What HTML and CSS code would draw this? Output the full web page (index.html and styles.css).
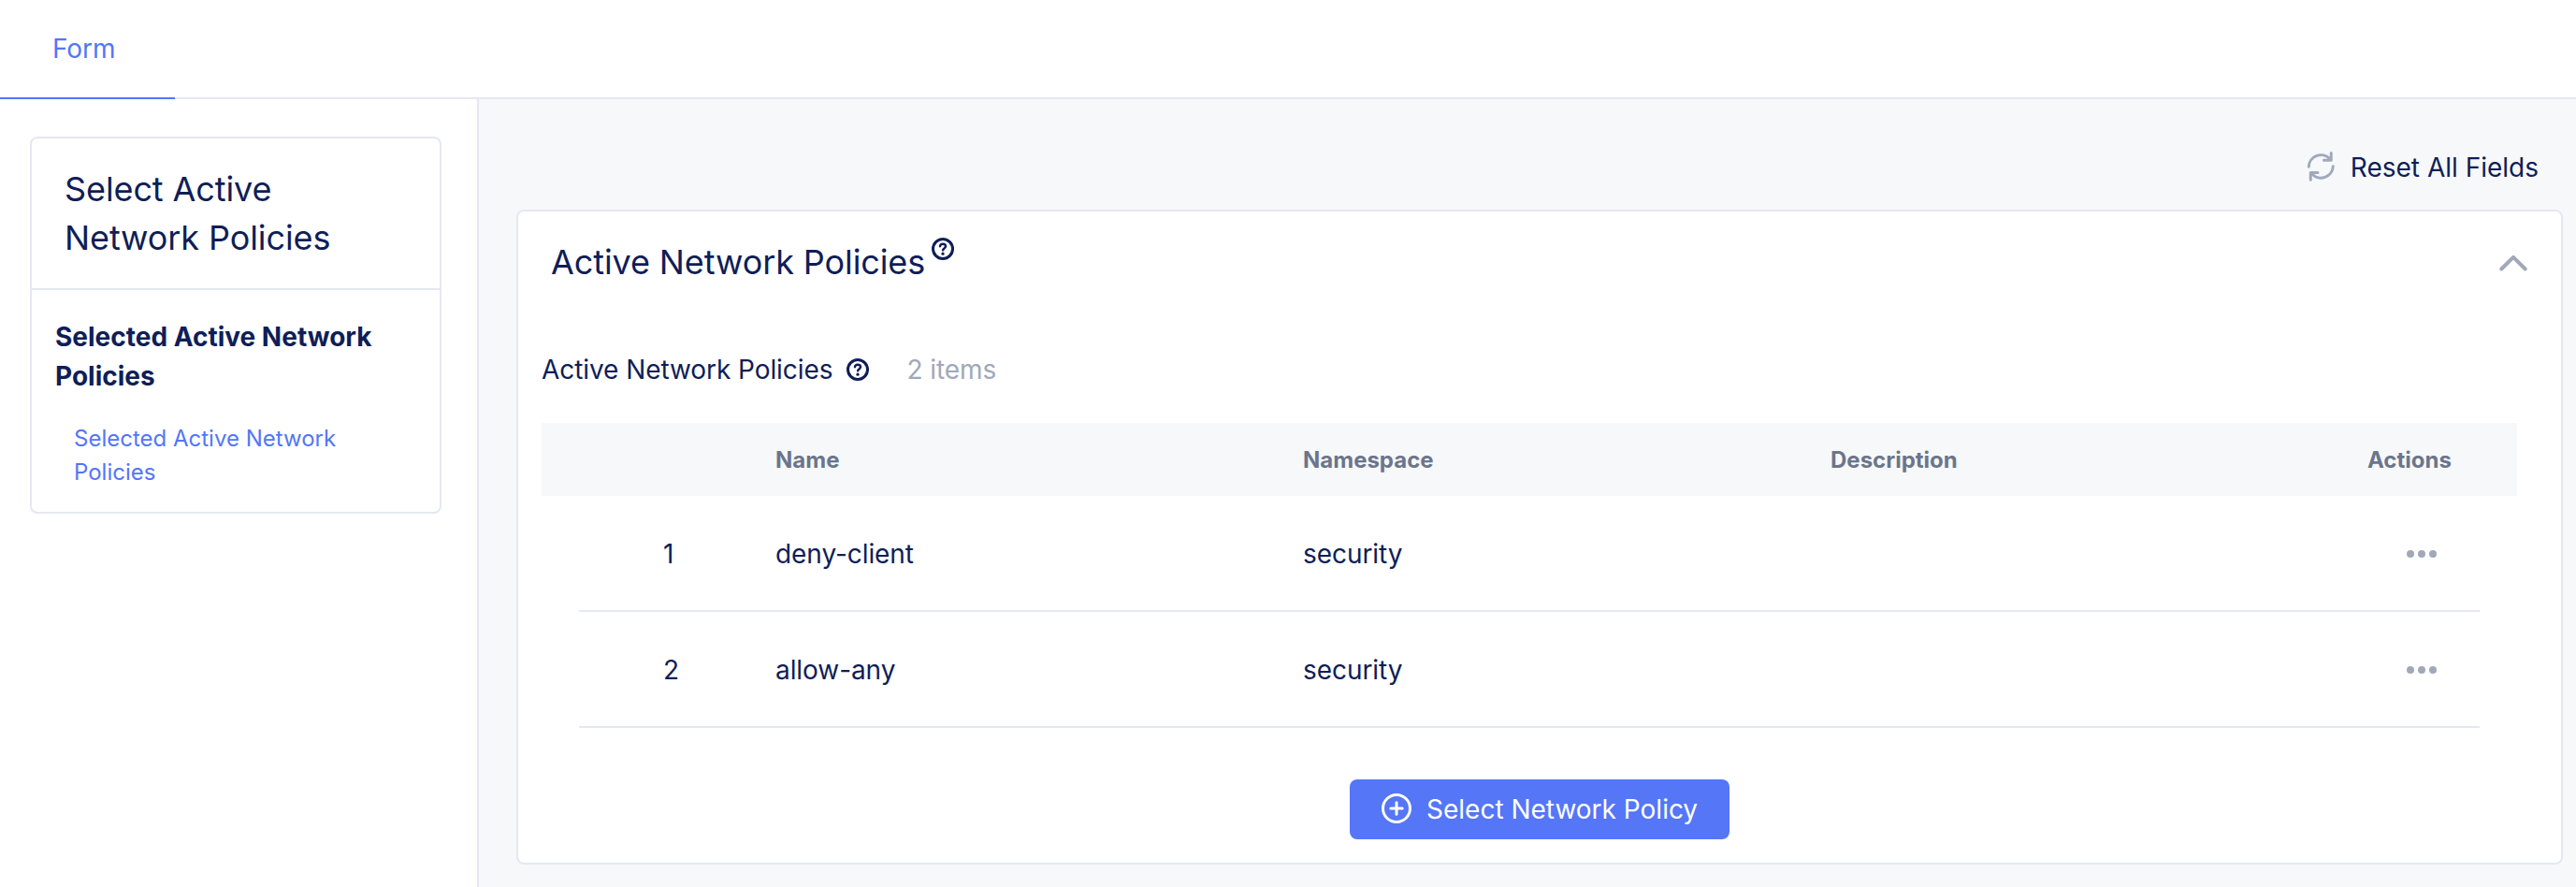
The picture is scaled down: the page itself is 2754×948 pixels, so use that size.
FILE: index.html
```html
<!DOCTYPE html>
<html lang="en">
<head>
<meta charset="utf-8">
<title>Active Network Policies</title>
<link rel="stylesheet" href="styles.css">
</head>
<body>
<header class="tabs"><a class="tab">Form</a></header>
<div class="layout">
  <aside class="sidebar">
    <nav class="nav-card">
      <h2 class="nav-title">Select Active<br>Network Policies</h2>
      <div class="nav-body">
        <div class="nav-section">Selected Active Network Policies</div>
        <a class="nav-link">Selected Active Network Policies</a>
      </div>
    </nav>
  </aside>
  <main class="content">
    <div class="toolbar">
      <svg class="refresh" viewBox="0 0 32 36" fill="none" stroke="#a0a8b9" stroke-width="3" stroke-linecap="round" stroke-linejoin="round"><path d="M3.300 18.300A13 13 0 0 1 26 10M27.200 3.500V11.200H19.500M29.300 17.800A13 13 0 0 1 6.600 25.800M5.300 32.300V24.600H13"/></svg>
      <span class="reset">Reset All Fields</span>
    </div>
    <section class="panel">
      <div class="panel-head">
        <h1 class="panel-title">Active Network Policies</h1>
        <svg class="help help-title" viewBox="0 0 24 24" fill="none" stroke="#0f1e57" stroke-linecap="round"><circle cx="12" cy="12" r="10.500" stroke-width="3"/><path d="M9 9.200c.2-1.500 1.400-2.500 3-2.500 1.700 0 3 1.100 3 2.600 0 1.900-2.700 2.200-2.900 4" stroke-width="2.500"/><circle cx="12" cy="17.200" r="1.600" fill="#0f1e57" stroke="none"/></svg>
        <svg class="chevron" viewBox="0 0 30 18" fill="none" stroke="#a0a8b9" stroke-width="4" stroke-linecap="round" stroke-linejoin="round"><path d="M2.300 15.500 15 2.800l12.700 12.700"/></svg>
      </div>
      <div class="field-head">
        <span>Active Network Policies</span>
        <svg class="help" viewBox="0 0 24 24" fill="none" stroke="#0f1e57" stroke-linecap="round"><circle cx="12" cy="12" r="10.500" stroke-width="3"/><path d="M9 9.200c.2-1.500 1.400-2.500 3-2.500 1.700 0 3 1.100 3 2.600 0 1.900-2.700 2.200-2.900 4" stroke-width="2.500"/><circle cx="12" cy="17.200" r="1.600" fill="#0f1e57" stroke="none"/></svg>
        <span class="count">2 items</span>
      </div>
      <div class="row thead"><span></span><span>Name</span><span>Namespace</span><span>Description</span><span>Actions</span></div>
      <div class="tbody">
        <div class="row"><span class="num">1</span><span>deny-client</span><span>security</span><span></span><svg class="dots" viewBox="0 0 32 8" fill="#a0a8b9"><circle cx="4" cy="4" r="4"/><circle cx="16" cy="4" r="4"/><circle cx="28" cy="4" r="4"/></svg></div>
        <div class="row"><span class="num">2</span><span>allow-any</span><span>security</span><span></span><svg class="dots" viewBox="0 0 32 8" fill="#a0a8b9"><circle cx="4" cy="4" r="4"/><circle cx="16" cy="4" r="4"/><circle cx="28" cy="4" r="4"/></svg></div>
      </div>
      <button class="select-btn">
        <svg class="plus" viewBox="0 0 32 32" fill="none" stroke="#fff" stroke-width="3" stroke-linecap="round"><circle cx="16" cy="16" r="14.500"/><path d="M16 9.800v12.400M9.800 16h12.400"/></svg>
        <span>Select Network Policy</span>
      </button>
    </section>
  </main>
</div>
</body>
</html>
```
FILE: styles.css
```css
* { box-sizing: border-box; }
body {
  margin: 0;
  height: 948px;
  display: flex;
  flex-direction: column;
  overflow: hidden;
  background: #fff;
  color: #0f1e57;
  font: 400 28px/42px Inter, sans-serif;
  letter-spacing: -0.0025em;
}
svg { display: block; flex: none; }
.tabs { height: 106px; display: flex; border-bottom: 2px solid #e5e8f2; }
.tab {
  width: 187px;
  height: 106px;
  padding: 31px 0 0 56px;
  border-bottom: 2px solid #5476f7;
  color: #5476f7;
}
.layout { flex: 1; display: flex; }
.sidebar { width: 512px; padding: 40px 38px 0 32px; border-right: 2px solid #e5e8f2; }
.nav-card { height: 403px; border: 2px solid #e5e8f2; border-radius: 8px; }
.nav-title {
  margin: 0;
  height: 162px;
  padding: 28px 0 0 35px;
  border-bottom: 2px solid #e5e8f2;
  font-size: 36px;
  line-height: 52px;
  font-weight: 400;
  letter-spacing: -0.1px;
}
.nav-body { padding: 29px 24px 0 25px; letter-spacing: 0; }
.nav-section { font-weight: 700; }
.nav-link { display: block; padding: 28px 60px 0 20px; font-size: 24px; line-height: 36px; color: #5476f7; }
.content { flex: 1; padding: 0 14px 0 40px; background: #f7f8fa; }
.toolbar { height: 118px; padding: 52px 26px 0 0; display: flex; justify-content: flex-end; gap: 16px; }
.refresh { width: 32px; height: 36px; margin-top: 2px; }
.reset { letter-spacing: 0; }
.panel {
  height: 700px;
  display: flex;
  flex-direction: column;
  padding: 0 47px 0 25px;
  border: 2px solid #e5e8f2;
  border-radius: 8px;
  background: #fff;
}
.panel-head { height: 142px; display: flex; padding: 28px 0 0 10px; }
.panel-title { margin: 0; font-size: 36px; line-height: 52px; font-weight: 400; letter-spacing: -0.1px; }
.help { width: 24px; height: 24px; }
.help-title { margin: 0 0 0 7px; }
.chevron { width: 30px; height: 18px; margin: 18px -11px 0 auto; }
.field-head { height: 84px; display: flex; padding-top: 6px; }
.field-head .help { margin: 9px 0 0 15px; }
.count { margin-left: 40px; color: #a0a8b9; }
.row { display: grid; grid-template-columns: 210px 564px 564px 574px 1fr; align-items: center; height: 124px; padding-top: 2px; }
.thead { height: 78px; padding-left: 40px; background: #f7f8fa; color: #6b758b; font-size: 24px; font-weight: 700; letter-spacing: 0; }
.tbody { padding: 0 40px; }
.tbody .row { border-bottom: 2px solid #e5e8f2; }
.num { padding-left: 90px; }
.dots { width: 32px; height: 8px; margin-left: 42px; }
.select-btn {
  align-self: center;
  width: 406px;
  height: 64px;
  margin: 55px 0 0 22px;
  padding: 0 0 2px 34px;
  display: flex;
  align-items: center;
  gap: 16px;
  border: 0;
  border-radius: 8px;
  background: #5476f7;
  color: #fff;
  font: inherit;
  letter-spacing: 0;
  white-space: nowrap;
}
.select-btn span { padding-top: 1px; }
.plus { width: 32px; height: 32px; }
```
